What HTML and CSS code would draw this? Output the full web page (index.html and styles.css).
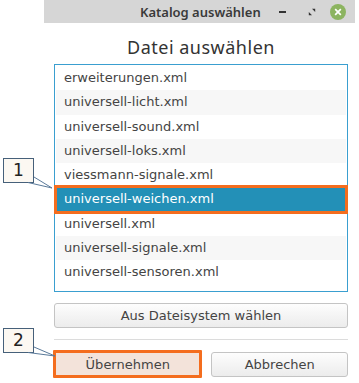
FILE: index.html
```html
<!DOCTYPE html>
<html>
<head>
<meta charset="utf-8">
<link rel="stylesheet" href="styles.css">
</head>
<body>
<div class="page">
  <div class="window">
    <div class="titlebar">
      <span class="title">Katalog auswählen</span>
      <div class="controls">
        <span class="ctl min"></span>
        <svg class="ctl" width="10" height="10" viewBox="0 0 10 10"><path d="M5 1h4v4zM5 9H1V5z" fill="#333"/></svg>
        <svg class="close" width="17" height="17" viewBox="0 0 17 17"><circle cx="8.5" cy="8.5" r="8.5" fill="#8cb460"/><path d="M5.5 5.5l6 6M11.5 5.5l-6 6" stroke="#fff" stroke-width="1.8"/></svg>
      </div>
    </div>
    <div class="content">
      <h1 class="heading">Datei auswählen</h1>
      <ul class="list">
        <li>erweiterungen.xml</li>
        <li>universell-licht.xml</li>
        <li>universell-sound.xml</li>
        <li>universell-loks.xml</li>
        <li>viessmann-signale.xml</li>
        <li class="selected">universell-weichen.xml</li>
        <li>universell.xml</li>
        <li>universell-signale.xml</li>
        <li>universell-sensoren.xml</li>
      </ul>
      <button class="btn wide">Aus Dateisystem wählen</button>
      <hr class="sep">
      <div class="actions">
        <button class="btn ok">Übernehmen</button>
        <button class="btn cancel">Abbrechen</button>
      </div>
    </div>
  </div>
  <div class="callout c1">1</div>
  <div class="callout c2">2</div>
  <svg class="pointers" width="359" height="383" viewBox="0 0 359 383">
    <path d="M28 182.5L52 188L34 177" fill="none" stroke="#5a7a9a" stroke-width="1"/>
    <path d="M28 352.5L55 356L34 347" fill="none" stroke="#5a7a9a" stroke-width="1"/>
  </svg>
</div>
</body>
</html>
```
FILE: styles.css
```css
* { box-sizing: border-box; }
html, body { margin: 0; padding: 0; background: #fff; }
.page { position: relative; width: 359px; height: 383px; padding-left: 44px; overflow: hidden; }
.window { width: 311px; }
.titlebar {
  height: 23px; background: #d6d6d6; display: flex; align-items: center;
  font-family: "Noto Sans", sans-serif; font-size: 13px; font-weight: 600; color: #3a3a3a;
  padding-right: 9px;
}
.title { margin-left: 96px; white-space: nowrap; flex-shrink: 0; }
.controls { display: flex; align-items: center; margin-left: auto; }
.ctl.min { width: 7px; height: 2px; background: #333; margin-right: 22px; }
svg.ctl { margin-right: 14px; width: 8px; height: 8px; }
.close { width: 16px; height: 16px; }
.content { padding: 0 7px 0 10px; }
.heading {
  margin: 9px 0 0; height: 32px; text-align: center; font-family: "Noto Sans", sans-serif;
  font-weight: 400; font-size: 18px; color: #333; letter-spacing: 0.5px; line-height: 30px;
}
.list {
  list-style: none; margin: 0; padding: 1px; width: 294px; height: 228px;
  border: 1px solid #3a9fd0; font-family: "DejaVu Sans", sans-serif; font-size: 13px; color: #444;
}
.list li { height: 24.3px; line-height: 24px; padding-left: 8px; }
.list li:nth-child(even) { background: #f7f7f7; }
.list li.selected {
  background: #2390b7; color: #fff; outline: 3px solid #f46d1e; outline-offset: -1px; position: relative;
}
.btn {
  font-family: "DejaVu Sans", sans-serif; font-size: 13px; color: #444; border: 1px solid #c4c4c4;
  border-radius: 3px; background: linear-gradient(#fdfdfd, #ececec); height: 25px; padding: 0;
}
.wide { display: block; width: 294px; margin-top: 11px; }
.sep { border: 0; border-top: 1px solid #dcdcdc; margin: 11px 0 0; width: 294px; }
.actions { display: flex; gap: 9px; margin-top: 12px; width: 294px; }
.ok { width: 150px; background: #f3e3da; border: 3px solid #f46d1e; border-radius: 1px; height: 28px; margin-top: -2px; margin-left: -1px; }
.cancel { width: 137px; }
.callout {
  position: absolute; left: 3px; width: 31px; height: 25px; background: #fcf8f2;
  border: 1px solid #46607a; font-family: "DejaVu Sans", sans-serif; font-size: 17px;
  color: #222; text-align: center; line-height: 23px;
}
.c1 { top: 158px; }
.c2 { top: 328px; }
.pointers { position: absolute; left: 0; top: 0; pointer-events: none; }
```
